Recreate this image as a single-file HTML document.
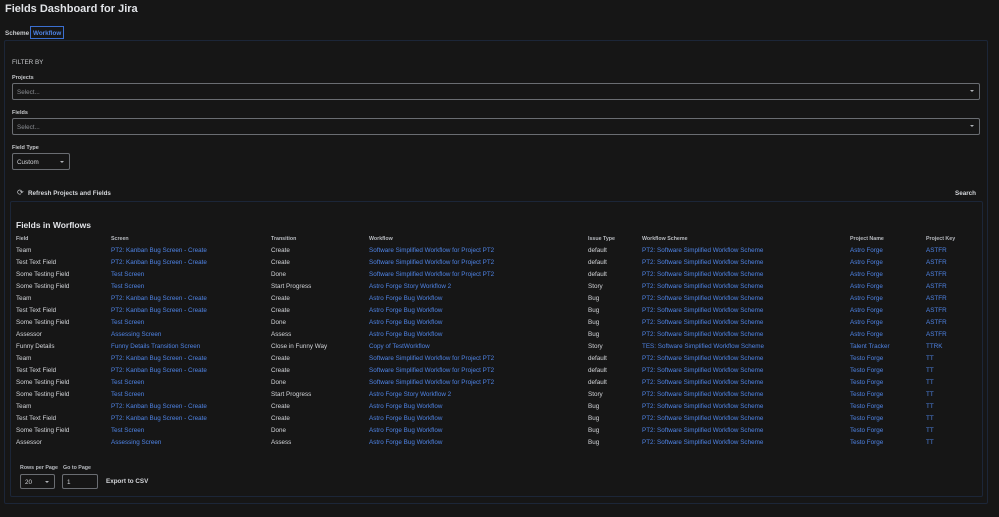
<!DOCTYPE html>
<html><head><meta charset="utf-8"><style>
*{margin:0;padding:0;box-sizing:border-box}
body{width:999px;height:517px;background:#161616;color:#d4d6da;font-family:"Liberation Sans",sans-serif;position:relative;overflow:hidden;font-size:6.3px}
.a{position:absolute;white-space:nowrap}
h1{position:absolute;left:5px;top:3px;font-size:11px;font-weight:bold;color:#e2e4e8}
.tab{position:absolute;top:30px;font-size:6.3px;font-weight:bold;color:#c8cacd}
.panel{position:absolute;left:4px;top:40px;width:984px;height:464px;border:1px solid #1c2638;border-radius:2px}
.inner{position:absolute;left:10px;top:201px;width:973px;height:296px;border:1px solid #1c2638;border-radius:2px}
.lbl{position:absolute;left:12px;font-size:5.5px;font-weight:bold;color:#c8cacd}
.inp{position:absolute;left:12px;width:968px;height:17px;border:1px solid #6a6d72;border-radius:2px;color:#8a8d92;font-size:6.3px;padding:5px 4px}
.car{position:absolute;right:5px;top:6px;width:0;height:0;border-left:2.5px solid transparent;border-right:2.5px solid transparent;border-top:2.5px solid #b0b3b8}
.h{font-size:5.3px;font-weight:bold;color:#b8bbc0}
.l{color:#4f84e6}
</style></head><body>
<h1>Fields Dashboard for Jira</h1>
<div class="tab" style="left:5px">Scheme</div>
<div class="a" style="left:30px;top:26px;width:34px;height:13px;border:1px solid #3b6fd0;color:#4f84e6;font-weight:bold;font-size:6.3px;padding:3px 2px">Workflow</div>
<div class="panel"></div>
<div class="a" style="left:12px;top:59px;font-size:6.3px;color:#c8cacd">FILTER BY</div>
<div class="lbl" style="top:75px">Projects</div>
<div class="inp" style="top:83px">Select...<div class="car"></div></div>
<div class="lbl" style="top:110px">Fields</div>
<div class="inp" style="top:118px">Select...<div class="car"></div></div>
<div class="lbl" style="top:145px">Field Type</div>
<div class="inp" style="top:153px;width:58px;color:#d4d6da">Custom<div class="car" style="right:5px;top:7px"></div></div>
<div class="a" style="left:17px;top:188px;font-size:8px;color:#c8cacd">⟳</div>
<div class="a" style="left:28px;top:190px;font-weight:bold">Refresh Projects and Fields</div>
<div class="a" style="left:955px;top:190px;font-weight:bold">Search</div>
<div class="inner"></div>
<div class="a" style="left:16px;top:220px;font-size:8.5px;font-weight:bold;color:#e2e4e8">Fields in Worflows</div>
<div id="t"></div>
<div class="a h" style="left:20px;top:465px">Rows per Page</div>
<div class="a h" style="left:63px;top:465px">Go to Page</div>
<div class="inp" style="left:20px;top:474px;width:35px;height:15px;color:#d4d6da;padding:4px">20<div class="car" style="right:5px;top:6px"></div></div>
<div class="inp" style="left:62px;top:474px;width:36px;height:15px;color:#d4d6da;padding:4px">1</div>
<div class="a" style="left:106px;top:478px;font-weight:bold">Export to CSV</div>
<script>
var X=[16,111,271,369,588,642,850,926];
var H=["Field","Screen","Transition","Workflow","Issue Type","Workflow Scheme","Project Name","Project Key"];
var WS="PT2: Software Simplified Workflow Scheme",SS="Software Simplified Workflow for Project PT2",KB="PT2: Kanban Bug Screen - Create";
var R=[
["Team",KB,"Create",SS,"default",WS,"Astro Forge","ASTFR"],
["Test Text Field",KB,"Create",SS,"default",WS,"Astro Forge","ASTFR"],
["Some Testing Field","Test Screen","Done",SS,"default",WS,"Astro Forge","ASTFR"],
["Some Testing Field","Test Screen","Start Progress","Astro Forge Story Workflow 2","Story",WS,"Astro Forge","ASTFR"],
["Team",KB,"Create","Astro Forge Bug Workflow","Bug",WS,"Astro Forge","ASTFR"],
["Test Text Field",KB,"Create","Astro Forge Bug Workflow","Bug",WS,"Astro Forge","ASTFR"],
["Some Testing Field","Test Screen","Done","Astro Forge Bug Workflow","Bug",WS,"Astro Forge","ASTFR"],
["Assessor","Assessing Screen","Assess","Astro Forge Bug Workflow","Bug",WS,"Astro Forge","ASTFR"],
["Funny Details","Funny Details Transition Screen","Close in Funny Way","Copy of TestWorkflow","Story","TES: Software Simplified Workflow Scheme","Talent Tracker","TTRK"],
["Team",KB,"Create",SS,"default",WS,"Testo Forge","TT"],
["Test Text Field",KB,"Create",SS,"default",WS,"Testo Forge","TT"],
["Some Testing Field","Test Screen","Done",SS,"default",WS,"Testo Forge","TT"],
["Some Testing Field","Test Screen","Start Progress","Astro Forge Story Workflow 2","Story",WS,"Testo Forge","TT"],
["Team",KB,"Create","Astro Forge Bug Workflow","Bug",WS,"Testo Forge","TT"],
["Test Text Field",KB,"Create","Astro Forge Bug Workflow","Bug",WS,"Testo Forge","TT"],
["Some Testing Field","Test Screen","Done","Astro Forge Bug Workflow","Bug",WS,"Testo Forge","TT"],
["Assessor","Assessing Screen","Assess","Astro Forge Bug Workflow","Bug",WS,"Testo Forge","TT"]];
var s="";
H.forEach(function(h,i){s+='<div class="a h" style="left:'+X[i]+'px;top:236px">'+h+'</div>';});
var L=[0,1,0,1,0,1,1,1];
R.forEach(function(r,j){r.forEach(function(c,i){s+='<div class="a'+(L[i]?' l':'')+'" style="left:'+X[i]+'px;top:'+(247+j*12)+'px">'+c+'</div>';});});
document.getElementById("t").innerHTML=s;
</script>
</body></html>
